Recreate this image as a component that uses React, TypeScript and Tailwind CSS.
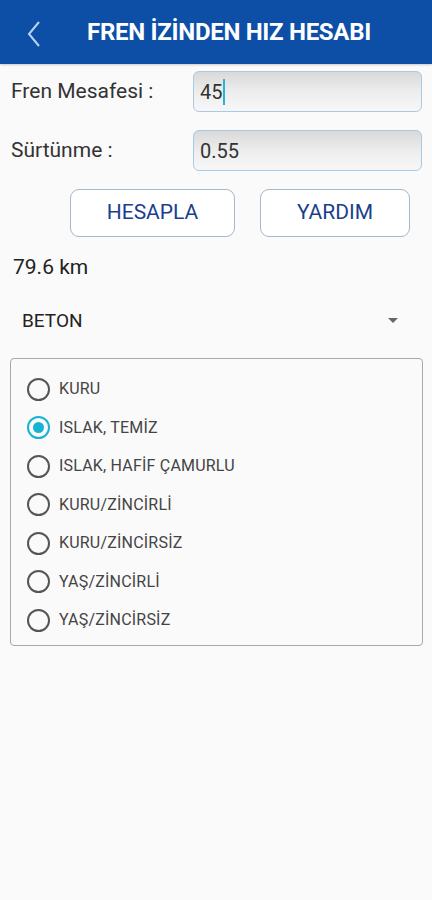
import { useState } from "react";

const options = [
  "KURU",
  "ISLAK, TEMİZ",
  "ISLAK, HAFİF ÇAMURLU",
  "KURU/ZİNCİRLİ",
  "KURU/ZİNCİRSİZ",
  "YAŞ/ZİNCİRLİ",
  "YAŞ/ZİNCİRSİZ",
];

export default function App() {
  const [selected, setSelected] = useState(1);

  return (
    <div className="min-h-[900px] w-[432px] bg-[#fafafa] font-['Roboto',sans-serif] text-[#222]">
      {/* header */}
      <div className="relative flex h-[64px] items-center justify-center bg-[#0d4fa6] shadow-[0_1px_2px_rgba(0,0,0,0.2)]">
        <button className="absolute left-[21px] top-[16px] p-1">
          <svg width="18" height="28" viewBox="0 0 18 28" fill="none">
            <path d="M14 2 L4 14 L14 26" stroke="#b9d3f2" strokeWidth="2" />
          </svg>
        </button>
        <h1 className="pl-[26px] text-[24px] font-bold tracking-[-0.3px] text-white">
          FREN İZİNDEN HIZ HESABI
        </h1>
      </div>

      <div className="px-[10px] pt-[7px]">
        <div className="flex items-center">
          <span className="w-[183px] pl-[1px] text-[21px] text-[#333]">Fren Mesafesi :</span>
          <div className="flex h-[41px] flex-1 items-center rounded-[6px] border border-[#a9c9e4] bg-gradient-to-b from-[#d9d9d9] via-[#ededed] to-[#f7f7f7] px-[6px] text-[20px] text-[#333]">
            45
            <span className="ml-[1px] inline-block h-[26px] w-[2px] bg-[#22b5d6]" />
          </div>
        </div>

        <div className="mt-[18px] flex items-center">
          <span className="w-[183px] pl-[1px] text-[21px] text-[#333]">Sürtünme :</span>
          <div className="flex h-[41px] flex-1 items-center rounded-[6px] border border-[#a9c9e4] bg-gradient-to-b from-[#d9d9d9] via-[#ededed] to-[#f7f7f7] px-[6px] text-[20px] text-[#333]">
            0.55
          </div>
        </div>

        <div className="mt-[18px] flex justify-end gap-[25px] pr-[12px]">
          <button className="h-[48px] w-[165px] rounded-[9px] border border-[#a9b7cc] bg-white text-[21px] text-[#1b3f8e]">
            HESAPLA
          </button>
          <button className="h-[48px] w-[150px] rounded-[9px] border border-[#a9b7cc] bg-white text-[21px] text-[#1b3f8e]">
            YARDIM
          </button>
        </div>

        <div className="mt-[15px] pl-[3px] text-[21px] text-[#222]">79.6 km</div>

        <div className="mt-[23px] flex items-center justify-between pl-[12px] pr-[23px]">
          <span className="text-[19px] text-[#222]">BETON</span>
          <svg width="12" height="7" viewBox="0 0 12 7">
            <path d="M1 1 L11 1 L6 6 Z" fill="#666" />
          </svg>
        </div>

        <div className="mt-[23px] w-[413px] rounded-[4px] border border-[#a8a8a8] px-[16px] pt-[11px] pb-[5px]">
          {options.map((opt, i) => (
            <label
              key={opt}
              className="flex h-[38.5px] cursor-pointer items-center gap-[9px]"
              onClick={() => setSelected(i)}
            >
              {selected === i ? (
                <span className="flex h-[23px] w-[23px] items-center justify-center rounded-full border-2 border-[#17b3d4]">
                  <span className="h-[11px] w-[11px] rounded-full bg-[#17b3d4]" />
                </span>
              ) : (
                <span className="h-[23px] w-[23px] rounded-full border-2 border-[#555]" />
              )}
              <span className="text-[16px] tracking-[0.2px] text-[#444]">{opt}</span>
            </label>
          ))}
        </div>
      </div>
    </div>
  );
}
